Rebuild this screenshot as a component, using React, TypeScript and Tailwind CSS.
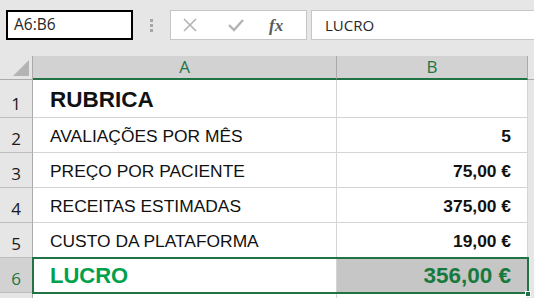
import React from 'react';

const rows = [
  { n: '1', label: 'RUBRICA', value: '', h: 'h-[38px]', big: true },
  { n: '2', label: 'AVALIAÇÕES POR MÊS', value: '5', h: 'h-[35px]' },
  { n: '3', label: 'PREÇO POR PACIENTE', value: '75,00 €', h: 'h-[35px]' },
  { n: '4', label: 'RECEITAS ESTIMADAS', value: '375,00 €', h: 'h-[35px]' },
  { n: '5', label: 'CUSTO DA PLATAFORMA', value: '19,00 €', h: 'h-[35px]' },
];

const ui = { fontFamily: '"Open Sans", "Noto Sans", sans-serif' };
const cell = { fontFamily: '"Liberation Sans", Arial, sans-serif' };

const App = () => {
  return (
    <div className="w-[534px] h-[298px] overflow-hidden bg-[#e6e6e6] flex flex-col">
      {/* formula bar */}
      <div className="h-[56px] flex items-start pt-[10px] pl-[6px] shrink-0">
        <div
          className="w-[127px] h-[30px] bg-white border-2 border-black flex items-center pl-[6px] text-[15.5px] text-[#262626]"
          style={ui}
        >
          A6:B6
        </div>
        <div className="w-[37px] h-[30px] flex flex-col items-center justify-center gap-[2px]">
          <span className="w-[3px] h-[3px] bg-[#a6a6a6]" />
          <span className="w-[3px] h-[3px] bg-[#a6a6a6]" />
          <span className="w-[3px] h-[3px] bg-[#a6a6a6]" />
        </div>
        <div className="w-[137px] h-[30px] bg-white border border-[#c6c6c6] flex items-center">
          <svg width="14" height="14" viewBox="0 0 14 14" className="ml-[12px]">
            <path d="M1 1 L13 13 M13 1 L1 13" stroke="#b3b3b3" strokeWidth="1.6" fill="none" />
          </svg>
          <svg width="16" height="14" viewBox="0 0 16 14" className="ml-[31px]">
            <path d="M1 7 L6 12 L15 2" stroke="#b3b3b3" strokeWidth="2.4" fill="none" />
          </svg>
          <span
            className="ml-[25px] text-[17px] italic font-bold text-[#5a5a5a] leading-none"
            style={{ fontFamily: '"Liberation Serif", "Times New Roman", serif' }}
          >
            fx
          </span>
        </div>
        <div
          className="ml-[4px] flex-1 h-[30px] bg-white border border-[#c6c6c6] border-r-0 flex items-center pl-[13px] text-[15px] text-[#262626]"
          style={ui}
        >
          LUCRO
        </div>
      </div>

      {/* sheet */}
      <div className="relative flex-1">
        {/* column headers */}
        <div className="flex h-[24px]" style={ui}>
          <div className="w-[33px] border-r border-[#ababab] border-b border-b-[#ababab] relative">
            <svg width="16" height="16" viewBox="0 0 16 16" className="absolute right-[3px] bottom-[3px]">
              <path d="M16 0 L16 16 L0 16 Z" fill="#b4b4b4" />
            </svg>
          </div>
          <div className="w-[304px] bg-[#d2d2d2] border-r border-[#ababab] border-b-2 border-b-[#217346] flex items-center justify-center text-[17px] text-[#217346]">
            A
          </div>
          <div className="w-[191px] bg-[#d2d2d2] border-r border-[#ababab] border-b-2 border-b-[#217346] flex items-center justify-center text-[17px] text-[#217346]">
            B
          </div>
          <div className="flex-1 border-b border-[#ababab]" />
        </div>

        {rows.map((r) => (
          <div key={r.n} className={`flex ${r.h}`}>
            <div
              className="w-[33px] border-r border-[#ababab] border-b border-b-[#bdbdbd] flex items-end justify-center pb-[1px] text-[17px] text-[#1a1a1a]"
              style={ui}
            >
              {r.n}
            </div>
            <div
              className={`w-[304px] bg-white border-r border-b border-[#d4d4d4] flex items-center pl-[17px] pt-[2px] text-[#111] ${
                r.big ? 'text-[22.5px] font-bold' : 'text-[17.4px]'
              }`}
              style={cell}
            >
              {r.label}
            </div>
            <div
              className="w-[191px] bg-white border-r border-b border-[#d4d4d4] flex items-center justify-end pr-[16px] pt-[2px] text-[17.4px] font-bold text-[#111]"
              style={cell}
            >
              {r.value}
            </div>
            <div className="flex-1" />
          </div>
        ))}

        {/* row 6 */}
        <div className="flex h-[35px]">
          <div
            className="w-[33px] bg-[#d2d2d2] border-r border-[#217346] border-b border-b-[#bdbdbd] flex items-end justify-center pb-[1px] text-[17px] text-[#217346]"
            style={ui}
          >
            6
          </div>
          <div
            className="w-[304px] bg-white border-r border-b border-[#d4d4d4] flex items-center pl-[17px] pt-[1px] text-[22px] font-bold text-[#00a14b]"
            style={cell}
          >
            LUCRO
          </div>
          <div
            className="w-[191px] bg-[#c6c6c6] border-r border-b border-[#d4d4d4] flex items-center justify-end pr-[16px] pt-[1px] text-[22.5px] font-bold text-[#177a3c]"
            style={cell}
          >
            356,00 €
          </div>
          <div className="flex-1" />
        </div>

        <div className="flex h-[20px]">
          <div className="w-[33px] border-r border-[#ababab]" />
          <div className="w-[304px] bg-white border-r border-[#d4d4d4]" />
          <div className="w-[191px] bg-white border-r border-[#d4d4d4]" />
          <div className="flex-1" />
        </div>

        {/* selection A6:B6 */}
        <div className="absolute left-[32px] top-[201px] w-[497px] h-[37px] border-2 border-[#217346] pointer-events-none" />
        <div className="absolute left-[525px] top-[235px] w-[6px] h-[6px] bg-[#217346] border border-white" />
      </div>
    </div>
  );
};

export default App;
